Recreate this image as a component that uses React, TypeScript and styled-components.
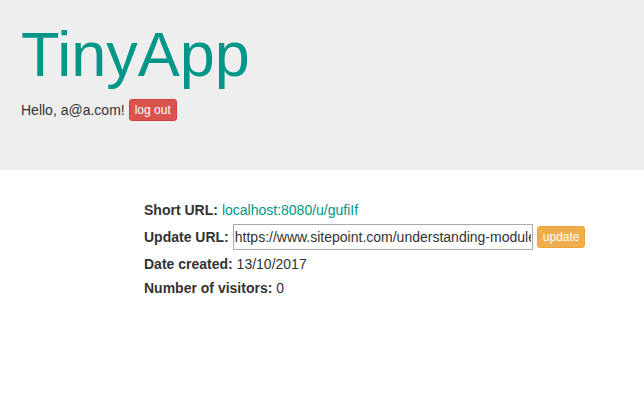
import React from "react";
import styled, { createGlobalStyle } from "styled-components";

const Global = createGlobalStyle`
  html, body { margin: 0; padding: 0; background: #fff; }
  body {
    font-family: "Liberation Sans", Arial, sans-serif;
    font-size: 14px;
    line-height: 20px;
    color: #333;
  }
`;

const Jumbotron = styled.header`
  background: #eee;
  height: 170px;
  box-sizing: border-box;
  padding: 20px 21px 0;
  margin-bottom: 30px;
`;

const Title = styled.h1`
  margin: 0 0 10px;
  font-size: 63px;
  line-height: 69px;
  font-weight: 400;
  color: #009688;
`;

const Greeting = styled.p`
  margin: 0;
  display: flex;
  align-items: center;
  gap: 4px;
  height: 22px;
`;

const Button = styled.button<{ $variant: "danger" | "warning" }>`
  font-family: inherit;
  font-size: 12px;
  line-height: 18px;
  padding: 1px 5px;
  border-radius: 3px;
  color: #fff;
  cursor: pointer;
  background: ${(p) => (p.$variant === "danger" ? "#d9534f" : "#f0ad4e")};
  border: 1px solid ${(p) => (p.$variant === "danger" ? "#d43f3a" : "#eea236")};
`;

const Details = styled.section`
  padding-left: 144px;
  display: flex;
  flex-direction: column;
  gap: 4px;
`;

const Row = styled.div<{ $tall?: boolean }>`
  display: flex;
  align-items: center;
  gap: 4px;
  height: ${(p) => (p.$tall ? "26px" : "20px")};
`;

const Label = styled.strong`
  font-weight: 700;
`;

const Link = styled.a`
  color: #009688;
  text-decoration: none;
`;

const UrlInput = styled.input`
  box-sizing: border-box;
  width: 300px;
  height: 26px;
  padding: 1px 1px;
  font-family: inherit;
  font-size: 14px;
  color: #333;
  border: 1px solid #a9a9a9;
  background: #fff;
`;

export default function App() {
  return (
    <>
      <Global />
      <Jumbotron>
        <Title>TinyApp</Title>
        <Greeting>
          Hello, a@a.com! <Button $variant="danger">log out</Button>
        </Greeting>
      </Jumbotron>
      <Details>
        <Row>
          <Label>Short URL:</Label>
          <Link href="#">localhost:8080/u/gufiIf</Link>
        </Row>
        <Row $tall>
          <Label>Update URL:</Label>
          <UrlInput defaultValue="https://www.sitepoint.com/understanding-module-exports-exporting-node-js/" />
          <Button $variant="warning">update</Button>
        </Row>
        <Row>
          <span>
            <Label>Date created:</Label> 13/10/2017
          </span>
        </Row>
        <Row>
          <span>
            <Label>Number of visitors:</Label> 0
          </span>
        </Row>
      </Details>
    </>
  );
}
